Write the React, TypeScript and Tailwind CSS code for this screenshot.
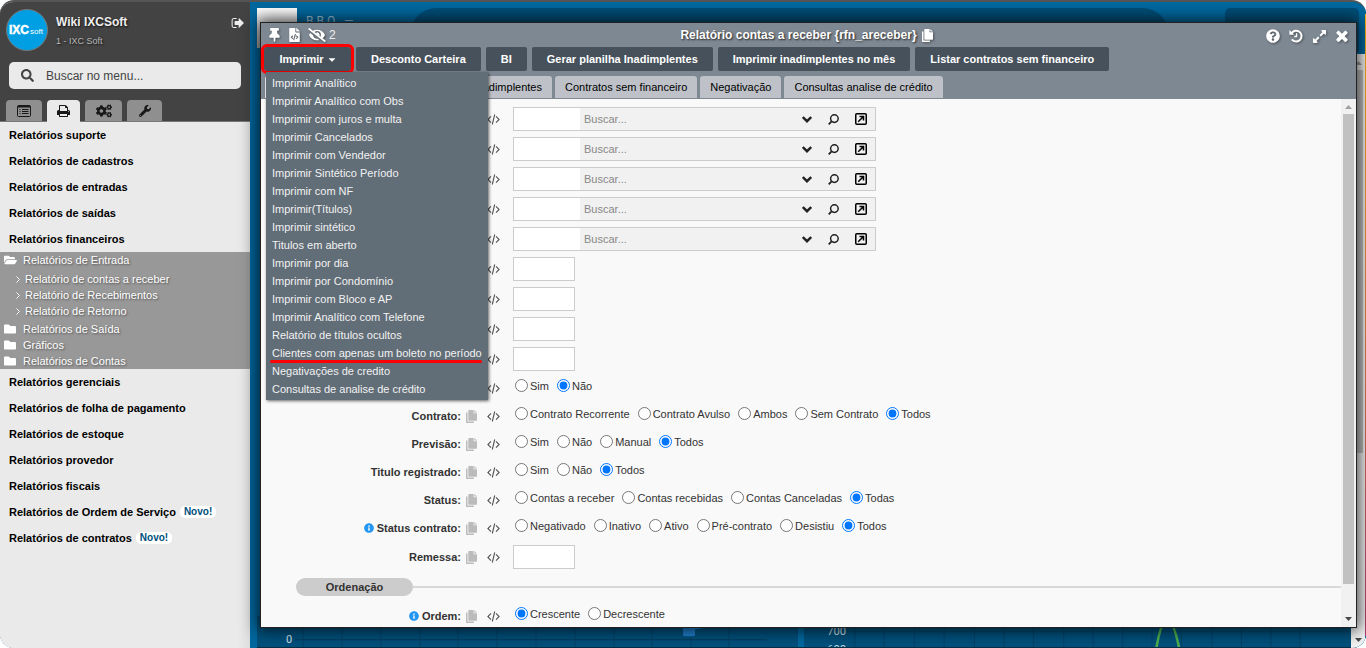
import React from 'react';
import {
  FaThumbtack, FaFileCode, FaEyeSlash, FaQuestionCircle, FaExpandAlt,
  FaFolder, FaFolderOpen, FaCogs, FaWrench, FaSearch, FaInfoCircle, FaCaretDown,
} from 'react-icons/fa';

const PrintIcon = () => (
  <svg viewBox="0 0 1664 1792" className="h-[14px] w-[13px]" fill="currentColor">
    <path d="M384 1536h896v-256h-896v256zM384 896h896v-384h-160q-40 0-68-28t-28-68v-160h-640v640zM1536 960q0-26-19-45t-45-19-45 19-19 45 19 45 45 19 45-19 19-45zM1664 960v416q0 13-9.500 22.500t-22.500 9.500h-224v160q0 40-28 68t-68 28h-960q-40 0-68-28t-28-68v-160h-224q-13 0-22.500-9.500t-9.500-22.500v-416q0-79 56.500-135.500t135.500-56.500h64v-544q0-40 28-68t68-28h672q40 0 88 20t76 48l152 152q28 28 48 76t20 88v256h64q79 0 135.500 56.500t56.500 135.500z" />
  </svg>
);

const SignOutIcon = () => (
  <svg viewBox="0 128 1632 1536" className="h-3 w-[13px]" fill="currentColor">
    <path d="M704 1440q0 4 1 20t.5 26.500-3 23.500-10 19.500-20.500 6.500h-320q-119 0-203.500-84.500t-84.500-203.500v-704q0-119 84.500-203.500t203.500-84.500h320q13 0 22.500 9.500t9.500 22.500q0 4 1 20t.5 26.500-3 23.500-10 19.500-20.500 6.500h-320q-66 0-113 47t-47 113v704q0 66 47 113t113 47h312l11.500 1 11.500 3 8 5.500 7 9 2 13.500zM1632 896q0 26-19 45l-544 544q-19 19-45 19t-45-19-19-45v-288h-448q-26 0-45-19t-19-45v-384q0-26 19-45t45-19h448v-288q0-26 19-45t45-19 45 19l544 544q19 19 19 45z" />
  </svg>
);

const CloseIcon = () => (
  <svg viewBox="110 302 1188 1252" className="h-3 w-3" fill="currentColor">
    <path d="M1298 1322q0 40-28 68l-136 136q-28 28-68 28t-68-28l-294-294-294 294q-28 28-68 28t-68-28l-136-136q-28-28-28-68t28-68l294-294-294-294q-28-28-28-68t28-68l136-136q28-28 68-28t68 28l294 294 294-294q28-28 68-28t68 28l136 136q28 28 28 68t-28 68l-294 294 294 294q28 28 28 68z" />
  </svg>
);

const HistoryIcon = () => (
  <svg viewBox="0 0 14 14" className="h-[14px] w-[14px]" fill="none" stroke="currentColor">
    <path d="M2.600 4.200A5.400 5.400 0 1 1 3.400 11" strokeWidth="2" strokeLinecap="round" />
    <path d="M.4 1v4.800h4.800z" fill="currentColor" stroke="none" />
    <path d="M7.600 4.300v3.200H5.300" strokeWidth="1.300" />
  </svg>
);

const CopyIcon = ({ className }: { className: string }) => (
  <svg viewBox="0 0 11 13" className={'shrink-0 ' + className} fill="currentColor">
    <path d="M0 2.500h1.500V11.500H8V12.200q0 .8-.8.800H.8Q0 13 0 12.200z" />
    <path d="M2.300.8Q2.300 0 3.100 0H7.600V3.300H11V9.900q0 .8-.8.800H3.100q-.8 0-.8-.8z" />
    <path d="M8.300 0L11 2.600H8.300z" />
  </svg>
);

const ListIcon = () => (
  <svg viewBox="0 0 14 12" className="h-3 w-[14px]" fill="none" stroke="currentColor">
    <rect x="0.5" y="0.5" width="13" height="11" rx="1" />
    <path d="M1 1.500h12" strokeWidth="2" />
    <path d="M2.500 4.500h1M5 4.500h6.500M2.500 6.500h1M5 6.500h6.500M2.500 8.500h1M5 8.500h6.500" />
  </svg>
);

const CodeIcon = () => (
  <svg viewBox="0 0 13 11" className="h-[11px] w-[13px] shrink-0 text-[#555]" fill="none" stroke="currentColor" strokeWidth="1.100">
    <path d="M4 2.300L.9 5.500 4 8.700M9 2.300l3.100 3.200L9 8.700M7.700.5L5.300 10.500" />
  </svg>
);

const ChevronIcon = () => (
  <svg viewBox="0 0 10 7" className="h-[7px] w-[10px]" fill="none" stroke="currentColor" strokeWidth="2.400">
    <path d="M.8 1L5 5.200 9.200 1" />
  </svg>
);

const LensIcon = () => (
  <svg viewBox="0 0 11 11" className="h-[11px] w-[11px]" fill="none" stroke="currentColor" strokeWidth="1.500">
    <circle cx="6.400" cy="4.600" r="3.800" />
    <path d="M3.600 7.400L.7 10.300" strokeWidth="1.800" />
  </svg>
);

const OpenIcon = () => (
  <svg viewBox="0 0 12 12" className="h-3 w-3" fill="none" stroke="currentColor" strokeWidth="1.500">
    <rect x=".75" y=".75" width="10.500" height="10.500" rx="1" />
    <path d="M3.200 8.800L8 4M4.500 3.500h4v4" />
  </svg>
);

const Arrow = ({ up = false, dark = false }: { up?: boolean; dark?: boolean }) => (
  <svg viewBox="0 0 7 4" className={'h-1 w-[7px] ' + (dark ? 'text-[#484848]' : 'text-[#a0a0a0]')} fill="currentColor">
    <path d={up ? 'M0 4L3.500 0 7 4z' : 'M0 0h7L3.500 4z'} />
  </svg>
);

const printOptions = [
  'Imprimir Analítico', 'Imprimir Analítico com Obs', 'Imprimir com juros e multa', 'Imprimir Cancelados',
  'Imprimir com Vendedor', 'Imprimir Sintético Período', 'Imprimir com NF', 'Imprimir(Títulos)', 'Imprimir sintético',
  'Titulos em aberto', 'Imprimir por dia', 'Imprimir por Condomínio', 'Imprimir com Bloco e AP',
  'Imprimir Analítico com Telefone', 'Relatório de títulos ocultos', 'Clientes com apenas um boleto no período',
  'Negativações de credito', 'Consultas de analise de crédito',
];

const actions = ['Desconto Carteira', 'BI', 'Gerar planilha Inadimplentes', 'Imprimir inadimplentes no mês', 'Listar contratos sem financeiro'];

const radioRows = [
  { name: 'opcao', label: '', options: ['Sim', 'Não'], value: 'Não' },
  { name: 'contrato', label: 'Contrato:', options: ['Contrato Recorrente', 'Contrato Avulso', 'Ambos', 'Sem Contrato', 'Todos'], value: 'Todos' },
  { name: 'previsao', label: 'Previsão:', options: ['Sim', 'Não', 'Manual', 'Todos'], value: 'Todos' },
  { name: 'registrado', label: 'Titulo registrado:', options: ['Sim', 'Não', 'Todos'], value: 'Todos' },
  { name: 'status', label: 'Status:', options: ['Contas a receber', 'Contas recebidas', 'Contas Canceladas', 'Todas'], value: 'Todas' },
  { name: 'status-contrato', label: 'Status contrato:', info: true, options: ['Negativado', 'Inativo', 'Ativo', 'Pré-contrato', 'Desistiu', 'Todos'], value: 'Todos' },
];

function RowLead({ label, htmlFor, info }: { label?: string; htmlFor?: string; info?: boolean }) {
  return (
    <>
      <div className="flex w-[200px] shrink-0 items-center justify-end gap-[3px] font-bold">
        {info && <FaInfoCircle className="h-[10px] w-[10px] text-[#2196f3]" />}
        {label && (htmlFor ? <label htmlFor={htmlFor}>{label}</label> : <span>{label}</span>)}
      </div>
      <CopyIcon className="mr-[10px] ml-[5px] h-[13px] w-[11px] text-[#bbb]" />
      <CodeIcon />
    </>
  );
}

function RadioRow({ name, label, options, value, info }: { name: string; label: string; options: string[]; value: string; info?: boolean }) {
  return (
    <div className="flex h-7 items-center">
      <RowLead label={label} info={info} />
      <div role="radiogroup" aria-label={label || name} className="ml-[15px] flex gap-2 pb-[5px]">
        {options.map((o) => (
          <label key={o} className="flex items-center gap-[2px] whitespace-nowrap">
            <input type="radio" name={name} defaultChecked={o === value} className="m-0 h-[13px] w-[13px]" />
            {o}
          </label>
        ))}
      </div>
    </div>
  );
}

const Entry = ({ children, badge }: { children: string; badge?: boolean }) => (
  <a href="#" className="flex h-[26px] items-center gap-1 pl-[9px] font-bold text-black">
    {children}
    {badge && <span className="rounded-[5px] bg-white px-1 text-[10px] leading-3 text-[#00507c]">Novo!</span>}
  </a>
);

const Folder = ({ children, open }: { children: string; open?: boolean }) => (
  <a href="#" className="flex h-4 items-center pl-1">
    <span className="w-[19px]">{open ? <FaFolderOpen className="h-3 w-[13px]" /> : <FaFolder className="h-3 w-3" />}</span>
    {children}
  </a>
);

function Sidebar() {
  return (
    <aside className="flex w-[250px] shrink-0 flex-col bg-[#eaeaea] shadow-[0_0_6px_rgba(0,0,0,0.6)]">
      <header className="h-[120px] border-b border-[#777] bg-[#434343] px-[6px] text-[#eee]">
        <div className="flex items-start pt-[7px]">
          <div className="flex h-[42px] w-[42px] shrink-0 items-center justify-center rounded-full border border-[#777] bg-[#009fe3]">
            <svg viewBox="0 0 36 14" className="h-[14px] w-9" fill="#fff" fontFamily="Liberation Sans, sans-serif" fontWeight="bold">
              <text x="0" y="11" fontSize="12" stroke="#fff" strokeWidth=".5">IXC</text>
              <text x="21" y="11" fontSize="8" fontWeight="normal">soft</text>
            </svg>
          </div>
          <div className="ml-2 flex-1 pt-[5px] [text-shadow:1px_1px_2px_#111]">
            <div className="text-[12px] leading-4 font-bold">Wiki IXCSoft</div>
            <div className="mt-[3px] text-[9px] leading-4 text-[#bbb]">1 - IXC Soft</div>
          </div>
          <button aria-label="Sair" className="mt-2"><SignOutIcon /></button>
        </div>
        <label className="mx-[3px] mt-[11px] flex h-[27px] items-center rounded-[5px] bg-[#eaeaea] pl-3 text-[#444]">
          <FaSearch className="h-[13px] w-[13px]" />
          <input aria-label="Buscar no menu" placeholder="Buscar no menu..." className="ml-3 min-w-0 flex-1 bg-transparent text-[12px] outline-none placeholder:text-[#444]" />
        </label>
        <nav className="mt-[11px] flex gap-[5px] text-[#181818]">
          <button aria-label="Cadastros" className="flex h-[21px] w-9 items-center justify-center rounded-t-[4px] bg-[#8f8f8f]"><ListIcon /></button>
          <button aria-label="Relatórios" className="flex h-[22px] w-[33px] items-center justify-center rounded-t-[4px] bg-[#eaeaea]"><PrintIcon /></button>
          <button aria-label="Configurações" className="flex h-[21px] w-[37px] items-center justify-center rounded-t-[4px] bg-[#8f8f8f]"><FaCogs className="h-[14px] w-4" /></button>
          <button aria-label="Ferramentas" className="flex h-[21px] w-[35px] items-center justify-center rounded-t-[4px] bg-[#8f8f8f]"><FaWrench className="h-3 w-3" /></button>
        </nav>
      </header>
      <nav className="flex-1 bg-linear-to-l from-[#dedede] to-[#eaeaea] to-[12px]">
        <Entry>Relatórios suporte</Entry>
        <Entry>Relatórios de cadastros</Entry>
        <Entry>Relatórios de entradas</Entry>
        <Entry>Relatórios de saídas</Entry>
        <Entry>Relatórios financeiros</Entry>
        <div className="bg-[#989898] text-white [text-shadow:1px_1px_2px_#555]">
          <Folder open>Relatórios de Entrada</Folder>
          <div className="mt-[3px] mb-[2px]">
            {['Relatório de contas a receber', 'Relatório de Recebimentos', 'Relatório de Retorno'].map((t) => (
              <a href="#" key={t} className="flex h-4 items-center gap-[5px] pl-4">
                <svg viewBox="0 0 4 7" className="h-[7px] w-1" fill="none" stroke="currentColor"><path d="M.5.5l3 3-3 3" /></svg>
                {t}
              </a>
            ))}
          </div>
          <Folder>Relatórios de Saída</Folder>
          <Folder>Gráficos</Folder>
          <Folder>Relatórios de Contas</Folder>
        </div>
        <Entry>Relatórios gerenciais</Entry>
        <Entry>Relatórios de folha de pagamento</Entry>
        <Entry>Relatórios de estoque</Entry>
        <Entry>Relatórios provedor</Entry>
        <Entry>Relatórios fiscais</Entry>
        <Entry badge>Relatórios de Ordem de Serviço</Entry>
        <Entry badge>Relatórios de contratos</Entry>
      </nav>
    </aside>
  );
}

function Dashboard() {
  return (
    <main className="flex min-w-0 flex-1 flex-col justify-between bg-[#00689f] pl-[7px]">
      <div className="flex h-[50px] pt-[6px] pr-[7px]">
        <div className="h-10 w-10 bg-linear-to-b from-white to-[#aaa]" />
        <div className="w-[114px] pt-[6px] pl-[9px] font-[Roboto,sans-serif] text-[12px] tracking-[3px] whitespace-nowrap text-[#9fc3d8]">BBO —</div>
        <div className="w-[757px] rounded-t-[25px] bg-[#004e78]" />
        <div className="ml-auto w-[134px] rounded-t-[5px] bg-[#004e78]" />
      </div>
      <div className="flex h-8 border-b border-[#033047] pr-[14px] font-[Roboto,sans-serif]">
        <svg viewBox="0 0 541 32" preserveAspectRatio="none" className="h-full w-[541px] bg-[#00507c]">
          <path d="M46 0v32M85 0v32M124 0v32M163 0v32M201 0v32M240 0v32M279 0v32M318 0v32M357 0v32M395 0v32M434 0v32M472 0v32" stroke="#00436a" />
          <path d="M38 24.500h472" stroke="#073b58" />
          <text x="29" y="28" fontSize="11" fill="#d5e3ec">0</text>
          <path d="M426 10h14l8 2-10 2v5q0 2-2 2h-8q-2 0-2-2z" fill="#2080d0" />
        </svg>
        <svg viewBox="0 0 540 32" preserveAspectRatio="xMinYMin slice" className="ml-[6px] h-full flex-1 bg-[#00507c]">
          <path d="M50 0v32M79 0v32M109 0v32M138 0v32M168 0v32M197 0v32M226 0v32M256 0v32M285 0v32M314 0v32M343 0v32M372 0v32M402 0v32M431 0v32M460 0v32M489 0v32" stroke="#00436a" />
          <path d="M42 15.500h498" stroke="#00436a" />
          <g fontSize="11" fill="#d5e3ec"><text x="23" y="19">700</text><text x="23" y="36">600</text></g>
          <path d="M347 33Q352 4 358 3Q364 4 370 33" fill="none" stroke="#4caf50" strokeWidth="2.500" />
        </svg>
      </div>
    </main>
  );
}

function SearchField({ n }: { n: number }) {
  return (
    <div className="flex h-[30px] items-center">
      <RowLead />
      <div className="ml-[13px] flex h-6 w-[363px] items-center border border-[#ccc] bg-[#f1f1f1]">
        <input aria-label={'Código ' + n} className="h-full w-[66px] bg-white outline-none" />
        <input aria-label={'Buscar ' + n} placeholder="Buscar..." className="h-full min-w-0 flex-1 bg-transparent pl-1 outline-none placeholder:text-[#888]" />
        <div className="flex items-center gap-4 pr-2 text-[#222]">
          <button aria-label="Abrir lista"><ChevronIcon /></button>
          <button aria-label="Pesquisar"><LensIcon /></button>
          <button aria-label="Abrir cadastro" className="text-black"><OpenIcon /></button>
        </div>
      </div>
    </div>
  );
}

function ReportDialog() {
  return (
    <section role="dialog" aria-label="Relatório contas a receber" className="absolute top-[22px] right-[9px] bottom-5 left-[260px] flex flex-col border border-[#222] bg-[#7e8892] shadow-[0_0_15px_2px_rgba(0,0,0,0.75)]">
      <header className="flex h-6 shrink-0 items-center px-2 text-white [&_svg]:drop-shadow-[1px_1px_1px_rgba(0,0,0,0.4)]">
        <div className="flex flex-1 items-center">
          <FaThumbtack className="mr-[9px] h-[14px] w-[11px]" />
          <FaFileCode className="mr-2 h-[14px] w-[11px]" />
          <FaEyeSlash className="mr-[3px] h-[14px] w-[18px]" />
          <span className="text-[12px] text-[#eee]">2</span>
        </div>
        <h1 className="flex items-center gap-[5px] pr-1 text-[12px] font-bold [text-shadow:1px_1px_2px_#222]">
          Relatório contas a receber {'{rfn_areceber}'}
          <CopyIcon className="h-[13px] w-[11px]" />
        </h1>
        <div className="flex flex-1 items-center justify-end gap-[9px] pt-[2px]">
          <button aria-label="Ajuda"><FaQuestionCircle className="h-[14px] w-[14px]" /></button>
          <button aria-label="Histórico"><HistoryIcon /></button>
          <button aria-label="Expandir"><FaExpandAlt className="h-[15px] w-[15px]" /></button>
          <button aria-label="Fechar"><CloseIcon /></button>
        </div>
      </header>
      <div className="flex h-6 shrink-0 gap-[5px] pl-[3px] font-bold text-white">
        <div className="relative">
          <button className="flex h-6 w-[87px] items-center justify-center gap-1 rounded-[3px] bg-[#47515b] outline-[3px] outline-[#f00]">
            Imprimir <FaCaretDown className="h-[11px] w-2" />
          </button>
          <ul className="absolute top-[25px] left-[2px] z-10 w-[222px] bg-[#616d77] py-[2px] font-normal text-[#f2f2f2] shadow-[1px_1px_3px_rgba(0,0,0,0.6)]">
            {printOptions.map((o) => (
              <li key={o} className="relative h-[18px] pl-[6px] leading-[18px] whitespace-nowrap">
                <a href="#">{o}</a>
                {o.startsWith('Clientes') && <span className="absolute -bottom-px left-1 h-[3px] w-[212px] rounded-full bg-[#f00]" />}
              </li>
            ))}
          </ul>
        </div>
        {actions.map((a) => (
          <button key={a} className="h-6 rounded-[2px] bg-[#47515b] px-[15px] whitespace-nowrap">{a}</button>
        ))}
      </div>
      <div className="mt-[5px] flex h-[22px] shrink-0 gap-[3px] pl-1 text-black">
        <span className="w-[100px] rounded-t-[3px] bg-[#f9f9f9]" />
        <button className="w-[184px] rounded-t-[3px] bg-[#bec2c8] pr-[10px] text-right">Inadimplentes</button>
        {['Contratos sem financeiro', 'Negativação', 'Consultas analise de crédito'].map((t) => (
          <button key={t} className="rounded-t-[3px] bg-[#bec2c8] px-[10px] whitespace-nowrap">{t}</button>
        ))}
      </div>
      <div className="mt-[1px] flex min-h-0 flex-1 bg-[#f9f9f9]">
        <form className="min-w-0 flex-1 overflow-hidden pt-[5px] text-[#333]">
          {[1, 2, 3, 4, 5].map((n) => <SearchField key={n} n={n} />)}
          {[1, 2, 3, 4].map((n) => (
            <div key={n} className="flex h-[30px] items-center">
              <RowLead />
              <input aria-label={'Valor ' + n} className="ml-[13px] h-6 w-[62px] border border-[#ccc] bg-white outline-none" />
            </div>
          ))}
          {radioRows.map((r) => <RadioRow key={r.name} {...r} />)}
          <div className="flex h-[30px] items-center">
            <RowLead label="Remessa:" htmlFor="remessa" />
            <input id="remessa" className="ml-[13px] h-6 w-[62px] border border-[#ccc] bg-white outline-none" />
          </div>
          <div className="my-[6px] flex items-center pl-[35px]">
            <h2 className="h-[18px] w-[117px] rounded-full bg-[#ccc] text-center leading-[18px] font-bold">Ordenação</h2>
            <div className="h-[2px] flex-1 bg-[#d8d8d8]" />
          </div>
          <RadioRow name="ordem" label="Ordem:" info options={['Crescente', 'Decrescente']} value="Crescente" />
        </form>
        <div className="flex w-[15px] flex-col items-center bg-[#f1f1f1] pt-[6px] pb-[6px]">
          <Arrow up />
          <div className="mt-[5px] mb-[33px] w-[11px] flex-1 bg-[#c1c1c1]" />
          <Arrow dark />
        </div>
      </div>
    </section>
  );
}

export default function App() {
  return (
    <div className="relative flex h-screen overflow-hidden rounded-[14px] border-t-2 border-[#555] bg-[#00689f] font-['Liberation_Sans',Arial,sans-serif] text-[11px] leading-[14px]">
      <Sidebar />
      <div className="relative flex min-w-0 flex-1">
        <Dashboard />
      </div>
      <div className="absolute top-[52px] right-[1px] bottom-0 flex w-[14px] flex-col items-center bg-[#f1f1f1] pt-[7px] pb-[6px]">
        <Arrow up />
        <div className="mt-[5px] w-[10px] flex-1 bg-[#c1c1c1]" />
        <div className="h-[185px]" />
        <Arrow dark />
      </div>
      <div className="absolute top-3 right-0 bottom-3 w-px bg-linear-to-b from-[#ffb400] via-[#f08040] to-[#b04070]" />
      <div className="pointer-events-none absolute inset-x-0 -top-[2px] bottom-0 [&>*]:pointer-events-auto">
        <ReportDialog />
      </div>
    </div>
  );
}
